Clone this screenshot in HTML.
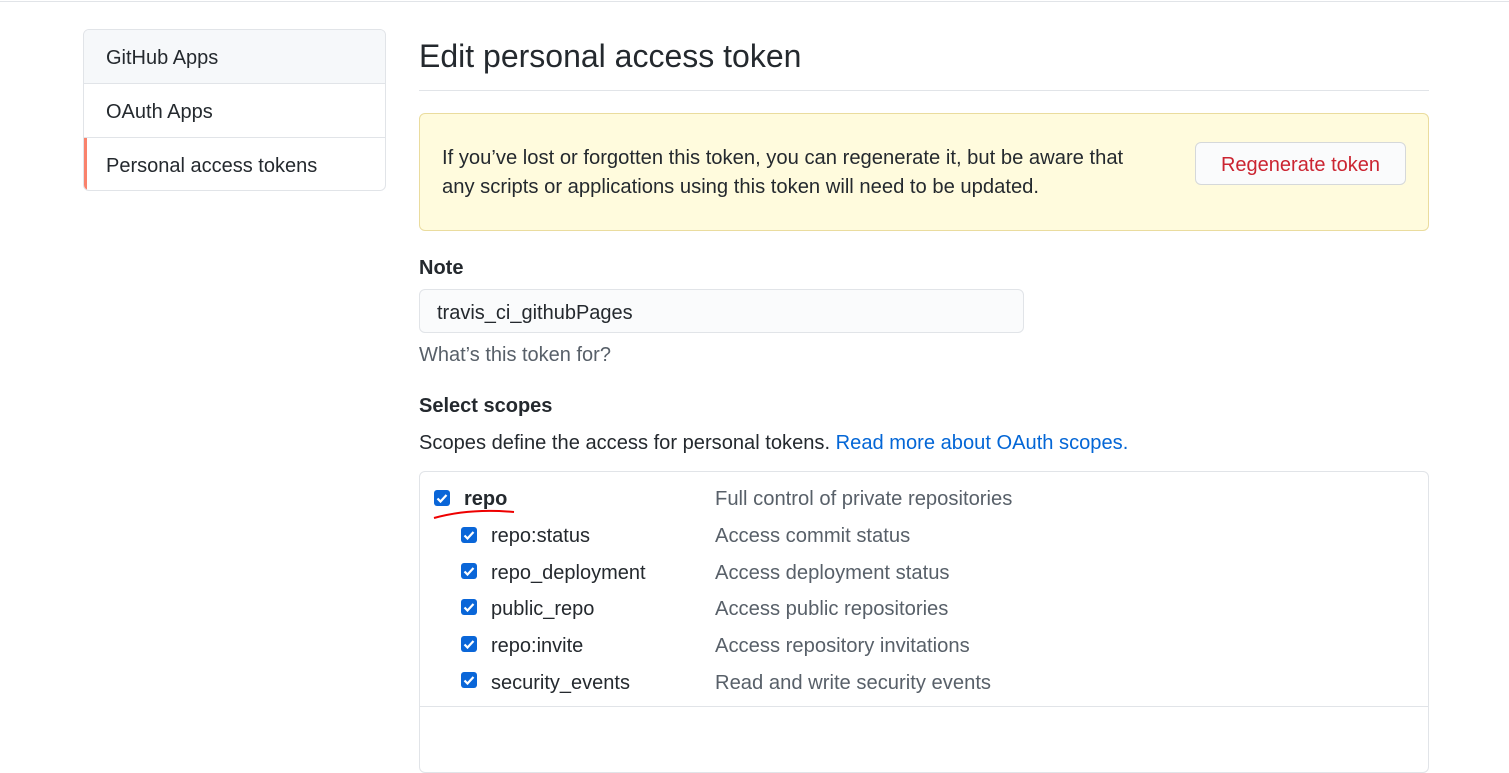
<!DOCTYPE html>
<html><head><style>
body{margin:0;width:1509px;height:718px;overflow:hidden;background:#fff;font-family:"Liberation Sans",sans-serif;color:#24292e;position:relative}
.a{position:absolute;white-space:nowrap}
.cb{position:absolute;width:16px;height:16px;background:#0a66d8;border-radius:3px}
.cb svg{position:absolute;left:0;top:0}
.d{font-size:20.2px;color:#586069}
</style></head><body>
<div class="a" style="left:0;top:1px;width:1509px;height:1px;background:#e1e4e8"></div>
<div class="a" style="left:83px;top:29px;width:301px;height:160px;border:1px solid #e1e4e8;border-radius:6px;overflow:hidden">
 <div style="height:53px;background:#f6f8fa;border-bottom:1px solid #e1e4e8;font-size:20px;line-height:57px;padding-left:22px">GitHub Apps</div>
 <div style="height:53px;border-bottom:1px solid #e1e4e8;font-size:20px;line-height:57px;padding-left:22px">OAuth Apps</div>
 <div style="height:53px;border-left:3px solid #f9826c;font-size:20px;line-height:57px;padding-left:19px">Personal access tokens</div>
</div>
<div class="a" style="left:419px;top:35px;font-size:32px;line-height:42px">Edit personal access token</div>
<div class="a" style="left:419px;top:90px;width:1010px;height:1px;background:#e1e4e8"></div>
<div class="a" style="left:419px;top:113px;width:1008px;height:116px;background:#fffbdd;border:1px solid #eadc9e;border-radius:6px"></div>
<div class="a" style="left:442px;top:144px;font-size:20.2px;line-height:29px">If you’ve lost or forgotten this token, you can regenerate it, but be aware that<br>any scripts or applications using this token will need to be updated.</div>
<div class="a" style="left:1195px;top:142px;width:209px;height:41px;background:#fafbfc;border:1px solid #d5d8da;border-radius:6px;text-align:center;line-height:44px;font-size:20px;color:#cb2431">Regenerate token</div>
<div class="a" style="left:419px;top:256px;font-size:20px;font-weight:bold;line-height:24px">Note</div>
<div class="a" style="left:419px;top:289px;width:603px;height:42px;background:#fafbfc;border:1px solid #e1e4e8;border-radius:6px"></div>
<div class="a" style="left:437px;top:301px;font-size:20px;line-height:24px">travis_ci_githubPages</div>
<div class="a" style="left:419px;top:343px;font-size:20px;line-height:24px;color:#586069">What’s this token for?</div>
<div class="a" style="left:419px;top:394px;font-size:20px;font-weight:bold;line-height:24px">Select scopes</div>
<div class="a" style="left:419px;top:431px;font-size:20.1px;line-height:24px">Scopes define the access for personal tokens. <span style="color:#0366d6">Read more about OAuth scopes.</span></div>
<div class="a" style="left:419px;top:471px;width:1008px;height:300px;border:1px solid #e1e4e8;border-radius:6px"></div>
<div class="a" style="left:420px;top:706px;width:1008px;height:1px;background:#e1e4e8"></div>
<svg class="a" style="left:430px;top:506px" width="90" height="16"><path d="M4 12 Q40 2 84 6" stroke="#e00" stroke-width="2" fill="none"/></svg>
<div class="cb" style="left:434px;top:490px"><svg width="16" height="16"><path d="M3.5 8.5l3 3 6-6.5" stroke="#fff" stroke-width="2.2" fill="none"/></svg></div>
<div class="a" style="left:464px;top:487px;font-size:20px;font-weight:bold;line-height:24px">repo</div>
<div class="a d" style="left:715px;top:487px;line-height:24px">Full control of private repositories</div>

<div class="cb" style="left:461px;top:527px"><svg width="16" height="16"><path d="M3.5 8.5l3 3 6-6.5" stroke="#fff" stroke-width="2.2" fill="none"/></svg></div>
<div class="a" style="left:491px;top:524px;font-size:20px;line-height:24px">repo:status</div>
<div class="a d" style="left:715px;top:524px;line-height:24px">Access commit status</div>

<div class="cb" style="left:461px;top:563px"><svg width="16" height="16"><path d="M3.5 8.5l3 3 6-6.5" stroke="#fff" stroke-width="2.2" fill="none"/></svg></div>
<div class="a" style="left:491px;top:561px;font-size:20px;line-height:24px">repo_deployment</div>
<div class="a d" style="left:715px;top:561px;line-height:24px">Access deployment status</div>

<div class="cb" style="left:461px;top:599px"><svg width="16" height="16"><path d="M3.5 8.5l3 3 6-6.5" stroke="#fff" stroke-width="2.2" fill="none"/></svg></div>
<div class="a" style="left:491px;top:597px;font-size:20px;line-height:24px">public_repo</div>
<div class="a d" style="left:715px;top:597px;line-height:24px">Access public repositories</div>

<div class="cb" style="left:461px;top:636px"><svg width="16" height="16"><path d="M3.5 8.5l3 3 6-6.5" stroke="#fff" stroke-width="2.2" fill="none"/></svg></div>
<div class="a" style="left:491px;top:634px;font-size:20px;line-height:24px">repo:invite</div>
<div class="a d" style="left:715px;top:634px;line-height:24px">Access repository invitations</div>

<div class="cb" style="left:461px;top:672px"><svg width="16" height="16"><path d="M3.5 8.5l3 3 6-6.5" stroke="#fff" stroke-width="2.2" fill="none"/></svg></div>
<div class="a" style="left:491px;top:671px;font-size:20px;line-height:24px">security_events</div>
<div class="a d" style="left:715px;top:671px;line-height:24px">Read and write security events</div>
</body></html>
